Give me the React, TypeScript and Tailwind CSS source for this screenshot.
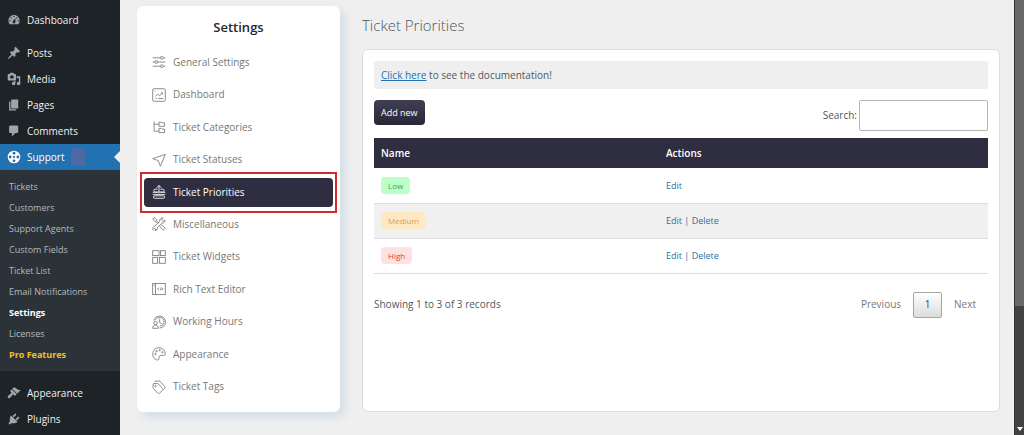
import { clsx } from "clsx";
import type { ReactNode } from "react";

interface MenuItem {
  label: string;
  path: string;
}

const DASHBOARD: MenuItem = {
  label: "Dashboard",
  path: "M3.76 16h12.48c1.1-1.37 1.76-3.11 1.76-5 0-4.42-3.58-8-8-8s-8 3.58-8 8c0 1.89.66 3.63 1.76 5zM10 4c.55 0 1 .45 1 1s-.45 1-1 1-1-.45-1-1 .45-1 1-1zM6 6c.55 0 1 .45 1 1s-.45 1-1 1-1-.45-1-1 .45-1 1-1zm8 0c.55 0 1 .45 1 1s-.45 1-1 1-1-.45-1-1 .45-1 1-1zm-5.37 5.55L12 7v6c0 1.1-.9 2-2 2s-2-.9-2-2c0-.57.24-1.08.63-1.45zM4 10c.55 0 1 .45 1 1s-.45 1-1 1-1-.45-1-1 .45-1 1-1zm12 0c.55 0 1 .45 1 1s-.45 1-1 1-1-.45-1-1 .45-1 1-1z",
};

const MENU_TOP: MenuItem[] = [
  {
    label: "Posts",
    path: "M10.44 3.02l1.82-1.82 6.36 6.35-1.83 1.82c-1.05-.68-2.48-.57-3.41.36l-.75.75c-.92.93-1.04 2.35-.35 3.41l-1.83 1.82-2.41-2.41-2.8 2.79c-.42.42-3.38 2.71-3.8 2.29s1.86-3.39 2.28-3.81l2.79-2.79L4.1 9.36l1.83-1.82c1.05.69 2.48.57 3.4-.36l.75-.75c.93-.92 1.05-2.35.36-3.41z",
  },
  {
    label: "Media",
    path: "M13 11V4c0-.55-.45-1-1-1h-1.67L9 1H5L3.67 3H2c-.55 0-1 .45-1 1v7c0 .55.45 1 1 1h10c.55 0 1-.45 1-1zM7 4.5c1.38 0 2.5 1.12 2.5 2.5S8.38 9.5 7 9.5 4.5 8.38 4.5 7 5.62 4.5 7 4.5zM14 6h5v10.5c0 1.38-1.12 2.5-2.5 2.5S14 17.88 14 16.5s1.12-2.5 2.5-2.5c.17 0 .34.02.5.05V9h-3V6zm-4 8.05V13h2v3.5c0 1.38-1.12 2.5-2.5 2.5S7 17.88 7 16.5 8.12 14 9.5 14c.17 0 .34.02.5.05z",
  },
  { label: "Pages", path: "M6 15V2h10v13H6zm-1 1h8v2H3V5h2v11z" },
  {
    label: "Comments",
    path: "M5 2h9c1.1 0 2 .9 2 2v7c0 1.1-.9 2-2 2h-2l-5 5v-5H5c-1.1 0-2-.9-2-2V4c0-1.1.9-2 2-2z",
  },
];

const MENU_BOTTOM: MenuItem[] = [
  {
    label: "Appearance",
    path: "M14.48 11.06L7.41 3.99l1.5-1.5c.5-.56 2.3-.47 3.51.32 1.21.8 1.43 1.28 2.91 2.1 1.18.64 2.45 1.26 4.45.85zm-.71.71L6.7 4.7 4.93 6.47c-.39.39-.39 1.02 0 1.41l1.06 1.06c.39.39.39 1.03 0 1.42-.6.6-1.43 1.11-2.21 1.69-.35.26-.7.53-1.01.84C1.43 14.23.4 16.08 1.4 17.07c.99 1 2.84-.03 4.18-1.36.31-.31.58-.66.85-1.02.57-.78 1.08-1.61 1.69-2.21.39-.39 1.02-.39 1.41 0l1.06 1.06c.39.39 1.02.39 1.41 0z",
  },
  {
    label: "Plugins",
    path: "M13.11 4.36L9.87 7.6 8 5.73l3.24-3.24c.35-.34 1.05-.2 1.56.32.52.51.66 1.21.31 1.55zm-8 1.77l.91-1.12 9.01 9.01-1.19.84c-.71.71-2.63 1.16-3.82 1.16H6.14L4.9 17.26c-.59.59-1.54.59-2.12 0-.59-.58-.59-1.53 0-2.12l1.24-1.24v-3.88c0-1.13.4-3.19 1.09-3.89zm7.26 3.97l3.24-3.24c.34-.35 1.04-.21 1.55.31.52.51.66 1.21.31 1.55l-3.24 3.25z",
  },
];

const SUBMENU = [
  "Tickets",
  "Customers",
  "Support Agents",
  "Custom Fields",
  "Ticket List",
  "Email Notifications",
  "Settings",
  "Licenses",
  "Pro Features",
];

// All drawn in a 20x20 box
const SETTINGS_TABS: { label: string; icon: ReactNode }[] = [
  {
    label: "General Settings",
    icon: (
      <>
        <path d="M1 4h11M16 4h3M1 10h3M8 10h11M1 16h11M16 16h3" />
        <circle cx="14" cy="4" r="2" />
        <circle cx="6" cy="10" r="2" />
        <circle cx="14" cy="16" r="2" />
      </>
    ),
  },
  {
    label: "Dashboard",
    icon: (
      <>
        <rect x="1" y="1" width="18" height="18" rx="2" />
        <path d="M4 4h1M5 12l3-3 3 2 4-4M13 7h2v2M5 15h2M9 15h7" />
      </>
    ),
  },
  {
    label: "Ticket Categories",
    icon: (
      <>
        <path d="M3 2v14h7M3 6h7" />
        <path d="M10 3h3l1 1h4v5h-8zM10 12h3l1 1h4v5h-8z" />
      </>
    ),
  },
  { label: "Ticket Statuses", icon: <path d="M19 2 1 8l8 3 3 8z" /> },
  {
    label: "Ticket Priorities",
    icon: (
      <>
        <path d="M10 12V1M6.5 4 10 .7 13.5 4" />
        <path d="M8 6H4.5a1.5 1.5 0 0 0 0 4h11a1.5 1.5 0 0 0 0-4H12" />
        <path d="M8 10.5H1M12 10.5h7M1 13.5h18" />
        <rect x="2" y="15.5" width="16" height="3.5" rx="1.7" />
      </>
    ),
  },
  {
    label: "Miscellaneous",
    icon: (
      <>
        <path d="M1 3l2-2 3.5 2.5v2l3 3M5.5 6.5l3 3M5.5 6.5H4L1 3M11 13l4 5c1.500 1.500 4.500-1.500 3-3l-5-4" />
        <path d="M18.500 4 16 6.500 13.500 4 16 1.500a4 4 0 0 0-5 5l-7 6.500a3.500 3.500 0 0 0-2.500 5l2-2 2.500 2.500-2 .8a4 4 0 0 0 4-4.500l6.500-6a4 4 0 0 0 4-4.800z" />
      </>
    ),
  },
  {
    label: "Ticket Widgets",
    icon: (
      <>
        <rect x="1" y="1" width="9" height="7" />
        <rect x="12" y="1" width="7" height="7" />
        <rect x="1" y="10.500" width="7" height="8.500" />
        <rect x="10.500" y="10.500" width="8.500" height="8.500" />
      </>
    ),
  },
  {
    label: "Rich Text Editor",
    icon: (
      <>
        <rect x="1" y="2" width="18" height="16" />
        <path d="M5 2v16M3 4v2M10 8l-2 2 2 2M14 8l2 2-2 2M12 12l1-4" />
      </>
    ),
  },
  {
    label: "Working Hours",
    icon: (
      <>
        <path d="M2.500 8a8.500 8.500 0 1 1 8.500 10.500M5 7a6.300 6.300 0 1 1 6 9" />
        <path d="M11 5.500V11l3 1.500" />
        <circle cx="5" cy="11.500" r="2.500" />
        <path d="M1 19c0-6 8-6 8 0z" />
      </>
    ),
  },
  {
    label: "Appearance",
    icon: (
      <>
        <path d="M10 1a9 9 0 0 0-4 17c3 1 4 1 4-2 0-4 1-4 4-4h3c2 0 2-1 2-2a9 9 0 0 0-9-9z" />
        <circle cx="5" cy="10" r="1" />
        <circle cx="6.500" cy="6" r="1" />
        <circle cx="11" cy="4.500" r="1" />
        <circle cx="15" cy="7.500" r="1" />
      </>
    ),
  },
  {
    label: "Ticket Tags",
    icon: (
      <>
        <path d="M1.500 6.500v4c0 1 .5 1.500 1 2l5.500 6c1 1 2 1 3 0l4-3.500c1-1 1-2 0-3L9 5.500c-.5-.5-1-.5-2-.5H3q-1.500 0-1.500 1.500z" />
        <path d="M3.500 3Q4 1.500 6 1.500h4c1 0 1.500.5 2 1l6 6.500c1 1 1 2 0 3l-1.500 2" />
        <circle cx="5" cy="8.500" r="1" />
      </>
    ),
  },
];

const PRIORITIES = [
  { name: "Low", badge: "bg-[#bcffc8] text-[#4c9a5c]", canDelete: false },
  { name: "Medium", badge: "bg-[#ffe9c4] text-[#dc9c50]", canDelete: true },
  { name: "High", badge: "bg-[#ffe2df] text-[#cf3f45]", canDelete: true },
];

function AdminMenuItem({ item }: { item: MenuItem }) {
  return (
    <li>
      <a href="#" className="flex h-[26px] items-center gap-1.5 pl-[7px]">
        <svg viewBox="0 0 20 20" className="size-3.5 fill-[#a0a5aa]">
          <path d={item.path} />
        </svg>
        {item.label}
      </a>
    </li>
  );
}

function AdminMenu() {
  return (
    <nav className="w-[120px] shrink-0 bg-[#1d2327] text-[10px] text-[#f0f0f1]">
      <ul className="pt-[7px]">
        <AdminMenuItem item={DASHBOARD} />
      </ul>
      <ul className="pt-[7px]">
        {MENU_TOP.map((item) => (
          <AdminMenuItem key={item.label} item={item} />
        ))}
        <li>
          <a
            href="#"
            className="relative flex h-[26px] items-center gap-1.5 bg-[#2271b1] pl-[7px] text-white"
          >
            <svg viewBox="0 0 20 20" className="size-3.5">
              <circle cx="10" cy="10" r="9" fill="white" />
              <g fill="#2271b1">
                <circle cx="10" cy="4.500" r="2" />
                <circle cx="15.500" cy="10" r="2" />
                <circle cx="10" cy="15.500" r="2" />
                <circle cx="4.500" cy="10" r="2" />
                <path d="M10 8l2 2-2 2-2-2z" />
              </g>
            </svg>
            Support
            <span className="h-[18px] w-3.5 rounded-xs bg-[#4a69a5]" />
            <span className="absolute right-0 border-y-[6px] border-r-[6px] border-y-transparent border-r-[#efefef]" />
          </a>
          <ul className="bg-[#2c3338] py-1.5 text-[9px] text-[#b4b9be]">
            {SUBMENU.map((label) => (
              <li key={label}>
                <a
                  href="#"
                  className={clsx(
                    "flex h-[21px] items-center pl-[9px]",
                    label === "Settings" && "font-bold text-white",
                    label === "Pro Features" && "font-bold text-[#f5c026]",
                  )}
                >
                  {label}
                </a>
              </li>
            ))}
          </ul>
        </li>
      </ul>
      <ul className="pt-[9px]">
        {MENU_BOTTOM.map((item) => (
          <AdminMenuItem key={item.label} item={item} />
        ))}
      </ul>
    </nav>
  );
}

function SettingsPanel() {
  return (
    <section className="w-[203px] shrink-0 self-start rounded-md bg-white px-[7px] pb-[9px] shadow-[5px_5px_10px_#d3dde6]">
      <h2 className="pt-2.5 pb-2 text-center text-[13px]/[22px] font-semibold text-[#23282d]">
        Settings
      </h2>
      <ul className="grid min-h-[357px] text-[10px] text-[#777]">
        {SETTINGS_TABS.map(({ label, icon }) => {
          const active = label === "Ticket Priorities";
          return (
            <li key={label} className="flex items-center">
              <a
                href="#"
                className={clsx(
                  "relative flex h-[29px] flex-1 items-center gap-[7px] rounded-sm pl-2",
                  active && "bg-[#2f2d40] text-white",
                )}
              >
                <svg
                  viewBox="0 0 20 20"
                  className="size-3.5 fill-none stroke-current stroke-[1.2]"
                >
                  {icon}
                </svg>
                {label}
                {active && (
                  <span className="absolute -inset-x-1 -inset-y-1.5 border-2 border-[#cf2b2e]" />
                )}
              </a>
            </li>
          );
        })}
      </ul>
    </section>
  );
}

function PrioritiesTable() {
  return (
    <table className="mt-[7px] w-full table-fixed text-left">
      <thead className="bg-[#2f2d40] text-white">
        <tr className="h-[30px]">
          <th className="w-[285px] px-[7px] font-semibold">Name</th>
          <th className="px-[7px] font-semibold">Actions</th>
        </tr>
      </thead>
      <tbody>
        {PRIORITIES.map(({ name, badge, canDelete }) => (
          <tr
            key={name}
            className="h-[35px] border-b border-[#dcdcdc] even:bg-[#f0f0f0]"
          >
            <td className="px-[7px]">
              <span
                className={clsx(
                  "inline-block rounded-sm px-[7px] align-middle text-[8px]/[17px]",
                  badge,
                )}
              >
                {name}
              </span>
            </td>
            <td className="px-[7px] text-[9px] text-[#2f6f9f]">
              <a href="#">Edit</a>
              {canDelete && (
                <>
                  {" | "}
                  <a href="#">Delete</a>
                </>
              )}
            </td>
          </tr>
        ))}
      </tbody>
    </table>
  );
}

export default function App() {
  return (
    <div className="flex min-h-screen bg-[#efefef] font-['Open_Sans','Noto_Sans',sans-serif] text-[10px] text-[#50575e]">
      <AdminMenu />
      <div className="flex min-w-0 flex-1 gap-[22px] pt-1.5 pr-3.5 pb-[23px] pl-[17px]">
        <SettingsPanel />
        <main className="flex min-w-0 flex-1 flex-col">
          <h1 className="pt-[7px] pb-[11px] text-[15px]/[25px] font-light">
            Ticket Priorities
          </h1>
          <section className="flex-1 rounded-md border border-[#dcdede] bg-white p-[11px]">
            <p className="rounded-xs bg-[#efefef] px-[7px] leading-7">
              <a href="#" className="text-[#2271b1] underline">
                Click here
              </a>{" "}
              to see the documentation!
            </p>
            <div className="mt-[11px] flex items-start justify-between">
              <button
                type="button"
                className="h-[25px] rounded-sm bg-linear-to-b from-[#413f52] to-[#282638] px-[7px] text-[9px] text-white"
              >
                Add new
              </button>
              <label className="flex items-center gap-0.5">
                Search:
                <input
                  type="search"
                  className="h-[31px] w-[129px] rounded-xs border border-[#b5b5b5] bg-white px-2"
                />
              </label>
            </div>
            <PrioritiesTable />
            <div className="flex items-center justify-between pt-[18px]">
              <p>Showing 1 to 3 of 3 records</p>
              <div className="flex items-center text-[#777]">
                <button type="button" className="px-3">
                  Previous
                </button>
                <button
                  type="button"
                  className="h-[26px] w-[29px] rounded-xs border border-[#a5a5a5] bg-linear-to-b from-white to-[#dcdcdc] text-[#444]"
                >
                  1
                </button>
                <button type="button" className="px-3">
                  Next
                </button>
              </div>
            </div>
          </section>
        </main>
      </div>
      <div className="flex w-2.5 shrink-0 flex-col items-center justify-between border-l border-[#333] bg-[#424242] pb-1">
        <div className="h-[306px] w-full bg-[#686868]" />
        <span className="border-x-[3px] border-t-4 border-x-transparent border-t-white" />
      </div>
    </div>
  );
}
